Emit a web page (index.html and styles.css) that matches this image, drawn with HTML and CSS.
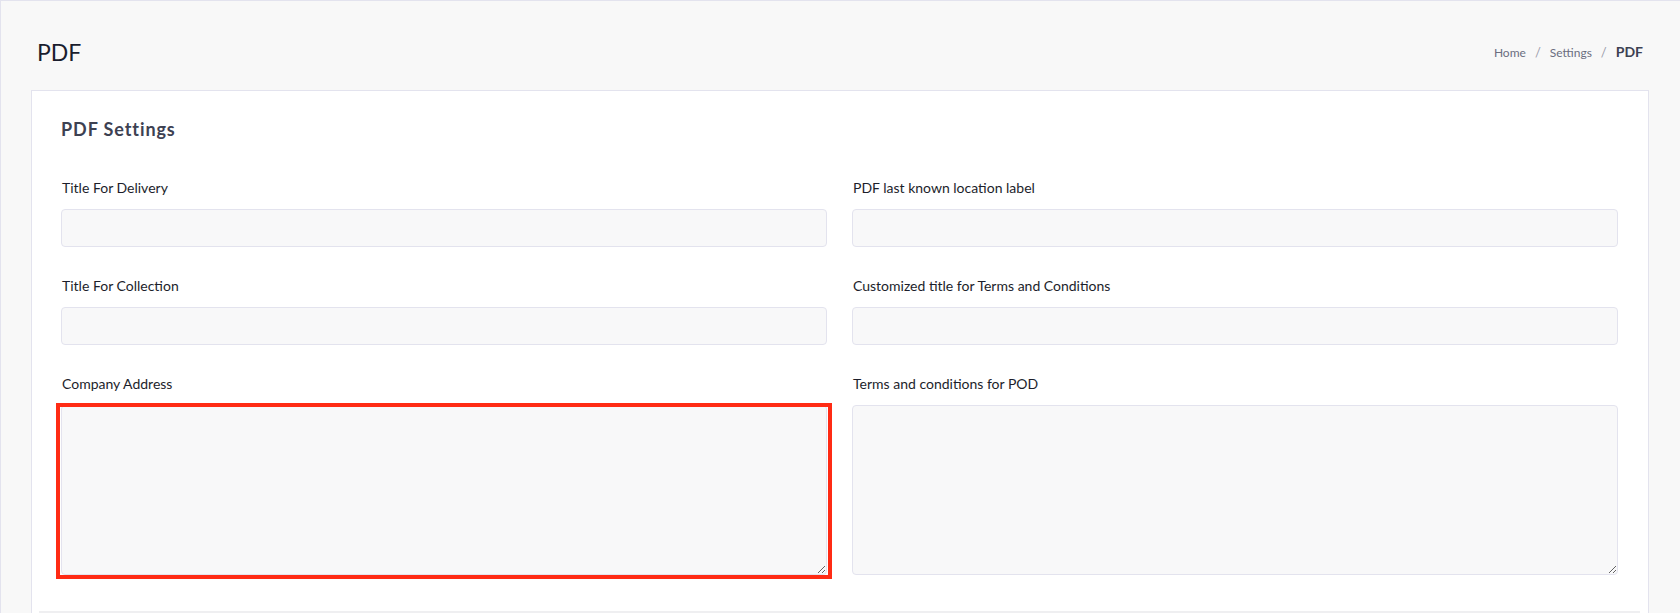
FILE: index.html
```html
<!DOCTYPE html>
<html lang="en">
<head>
    <meta charset="UTF-8">
    <title>PDF | Settings</title>
    <meta name="viewport" content="width=device-width, initial-scale=1.0">
    <link rel="stylesheet" href="styles.css">
</head>
<body>
<div class="page">
    <div class="page-header">
        <h1 class="page-title">PDF</h1>
        <ol class="breadcrumb">
            <li><a href="#">Home</a></li>
            <li class="sep">/</li>
            <li><a href="#">Settings</a></li>
            <li class="sep">/</li>
            <li class="active">PDF</li>
        </ol>
    </div>
    <div class="card">
        <h4 class="card-title">PDF Settings</h4>
        <form class="settings-form">
            <div class="form-group">
                <label>Title For Delivery</label>
                <input type="text" class="form-control">
            </div>
            <div class="form-group">
                <label>PDF last known location label</label>
                <input type="text" class="form-control">
            </div>
            <div class="form-group">
                <label>Title For Collection</label>
                <input type="text" class="form-control">
            </div>
            <div class="form-group">
                <label>Customized title for Terms and Conditions</label>
                <input type="text" class="form-control">
            </div>
            <div class="form-group">
                <label>Company Address</label>
                <div class="mark-box">
                    <textarea class="form-control"></textarea>
                </div>
            </div>
            <div class="form-group">
                <label>Terms and conditions for POD</label>
                <textarea class="form-control"></textarea>
            </div>
        </form>
        <div class="card-divider"></div>
    </div>
</div>
</body>
</html>
```

FILE: styles.css
```css
:root {
    --bg: #f8f8f8;
    --line: #e3e3ee;
    --text: #1c1e2b;
    --muted: #6b6e80;
    --heading: #3d4152;
    --input-bg: #f8f8f9;
    --mark: #ff2b14;
}
body {
    margin: 0;
    background: var(--bg);
    font-family: 'Lato', 'Open Sans', Arial, sans-serif;
    color: var(--text);
}
.page {
    min-height: 100vh;
    border-top: 1px solid var(--line);
    border-left: 1px solid var(--line);
    box-sizing: border-box;
    overflow: hidden;
}
.page-header {
    display: flex;
    justify-content: space-between;
    align-items: center;
    padding: 38px 37px 23px 36px;
}
.page-title {
    margin: 0;
    font-size: 23px;
    font-weight: 400;
    line-height: 1.2;
    color: #1a1d2e;
}
.breadcrumb {
    display: flex;
    align-items: baseline;
    gap: 9px;
    list-style: none;
    margin: 0;
    padding: 0;
    line-height: 20px;
    font-size: 12px;
}
.breadcrumb a {
    color: var(--muted);
    text-decoration: none;
}
.breadcrumb .sep {
    color: #9a9cab;
    font-size: 13px;
}
.breadcrumb .active {
    font-size: 14px;
    font-weight: bold;
    color: var(--heading);
}
.card {
    background: #fff;
    border: 1px solid var(--line);
    margin: 0 31px 0 30px;
    padding: 28px 30px 0 29px;
}
.card-title {
    margin: 0 0 40px 0;
    font-size: 18px;
    font-weight: bold;
    line-height: 1.2;
    letter-spacing: 0.9px;
    color: var(--heading);
}
.settings-form {
    display: grid;
    grid-template-columns: 1fr 1fr;
    column-gap: 25px;
}
.form-group {
    display: flex;
    flex-direction: column;
    margin-bottom: 31px;
}
.form-group label {
    font-size: 14px;
    line-height: 1.2;
    margin: 0 0 12px 1px;
}
.form-control {
    display: block;
    box-sizing: border-box;
    width: 100%;
    height: 38px;
    background: var(--input-bg);
    border: 1px solid var(--line);
    border-radius: 4px;
    font-family: inherit;
    font-size: 14px;
    padding: 6px 12px;
    outline: none;
}
textarea.form-control {
    height: 170px;
    resize: vertical;
}
/* red annotation box round the company address */
.mark-box {
    position: relative;
}
.mark-box::after {
    content: "";
    position: absolute;
    top: -2px;
    left: -5px;
    right: -5px;
    bottom: -4px;
    border: 4px solid var(--mark);
    pointer-events: none;
}
.card-divider {
    margin: 5px -22px 0 -22px;
    border-top: 2px solid #efeff1;
}
```
